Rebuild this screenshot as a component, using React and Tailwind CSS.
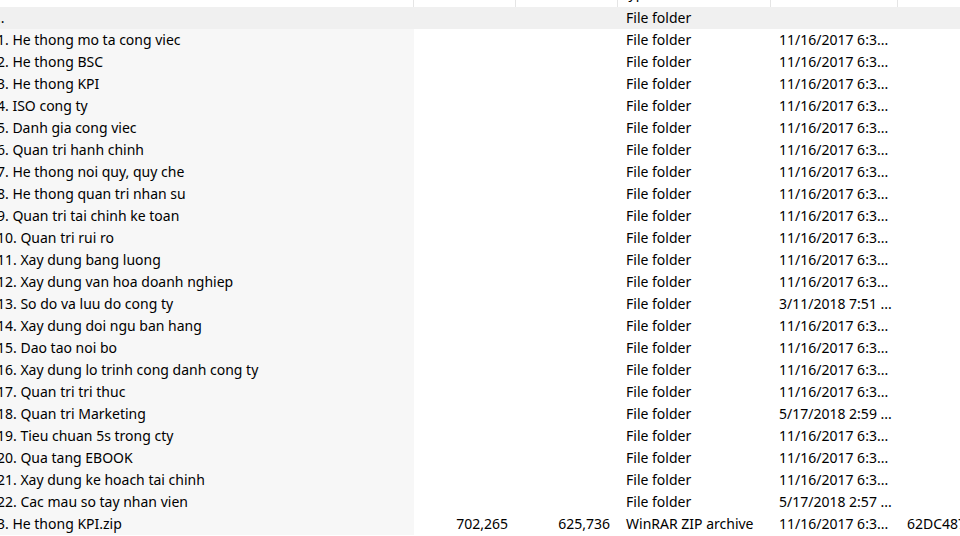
import React from "react";

const OLD = "11/16/2017 6:3...";

const rows = [
  { name: "1. He thong mo ta cong viec", date: OLD },
  { name: "2. He thong BSC", date: OLD },
  { name: "3. He thong KPI", date: OLD },
  { name: "4. ISO cong ty", date: OLD },
  { name: "5. Danh gia cong viec", date: OLD },
  { name: "6. Quan tri hanh chinh", date: OLD },
  { name: "7. He thong noi quy, quy che", date: OLD },
  { name: "8. He thong quan tri nhan su", date: OLD },
  { name: "9. Quan tri tai chinh ke toan", date: OLD },
  { name: "10. Quan tri rui ro", date: OLD },
  { name: "11. Xay dung bang luong", date: OLD },
  { name: "12. Xay dung van hoa doanh nghiep", date: OLD },
  { name: "13. So do va luu do cong ty", date: "3/11/2018 7:51 ..." },
  { name: "14. Xay dung doi ngu ban hang", date: OLD },
  { name: "15. Dao tao noi bo", date: OLD },
  { name: "16. Xay dung lo trinh cong danh cong ty", date: OLD },
  { name: "17. Quan tri tri thuc", date: OLD },
  { name: "18. Quan tri Marketing", date: "5/17/2018 2:59 ..." },
  { name: "19. Tieu chuan 5s trong cty", date: OLD },
  { name: "20. Qua tang EBOOK", date: OLD },
  { name: "21. Xay dung ke hoach tai chinh", date: OLD },
  { name: "22. Cac mau so tay nhan vien", date: "5/17/2018 2:57 ..." },
  {
    name: "3. He thong KPI.zip",
    size: "702,265",
    packed: "625,736",
    type: "WinRAR ZIP archive",
    date: OLD,
    crc: "62DC487A",
  },
];

function Row({ item, parent }) {
  return (
    <div
      className={
        "grid grid-cols-[414px_102px_102px_153px_127px_1fr] h-[22px] leading-[22px] whitespace-nowrap " +
        (parent ? "bg-[#f0f0f0]" : "")
      }
    >
      <div className={"overflow-hidden " + (parent ? "" : "bg-[#f7f7f7]")}>
        <span className="block -ml-[3px]">{item.name}</span>
      </div>
      <div className="text-right pr-[8px] overflow-hidden">{item.size}</div>
      <div className="text-right pr-[8px] overflow-hidden">{item.packed}</div>
      <div className="pl-[8px] overflow-hidden">{item.type || "File folder"}</div>
      <div className="pl-[8px] overflow-hidden">{item.date}</div>
      <div className="pl-[9px] overflow-hidden">{item.crc}</div>
    </div>
  );
}

export default function App() {
  return (
    <div className="w-[960px] h-[536px] overflow-hidden bg-white text-black text-[14px] font-['Noto_Sans',sans-serif]">
      {/* Column header, mostly scrolled out of view */}
      <div className="flex h-[7px] overflow-hidden">
        <div className="w-[414px] border-r border-[#e5e5e5]" />
        <div className="w-[102px] border-r border-[#e5e5e5]" />
        <div className="w-[102px] border-r border-[#e5e5e5]" />
        <div className="w-[153px] border-r border-[#e5e5e5] pl-[3px]">
          <div className="-mt-[18px] h-[22px] leading-[22px]">Type</div>
        </div>
        <div className="w-[127px] border-r border-[#e5e5e5]" />
        <div className="flex-1" />
      </div>

      <Row item={{ name: "..", date: "" }} parent />
      {rows.map((r) => (
        <Row key={r.name} item={r} />
      ))}
    </div>
  );
}
